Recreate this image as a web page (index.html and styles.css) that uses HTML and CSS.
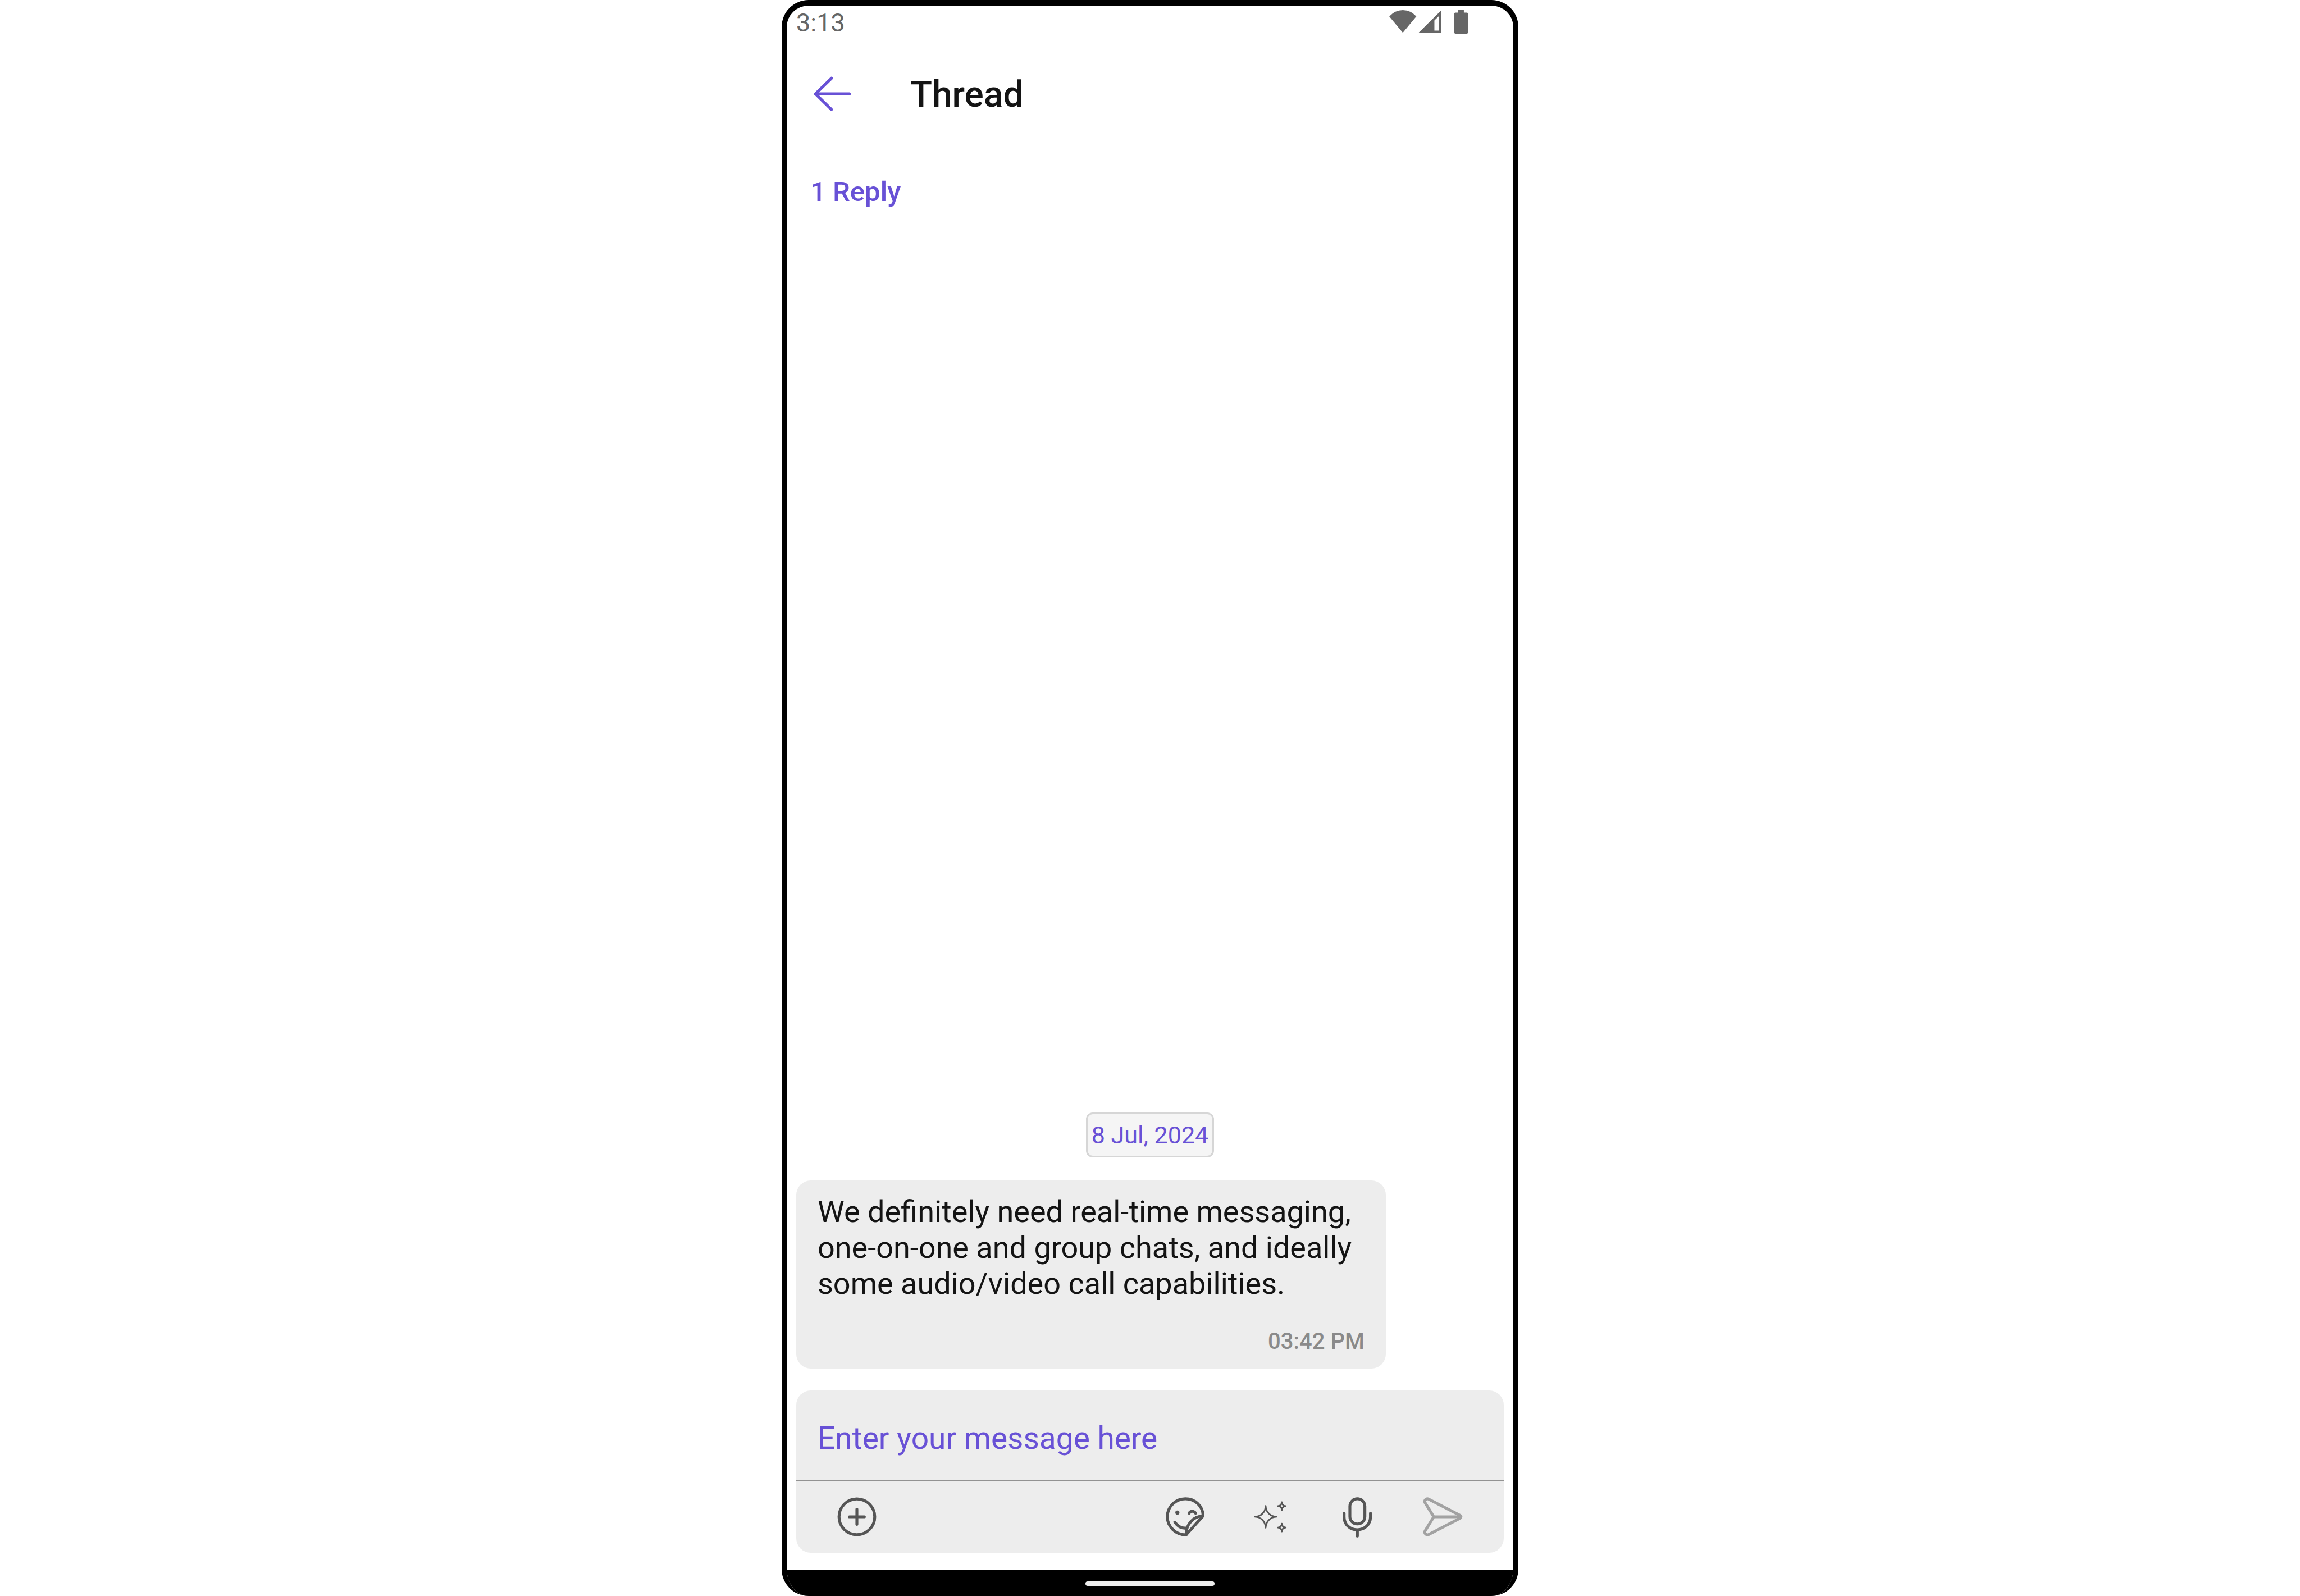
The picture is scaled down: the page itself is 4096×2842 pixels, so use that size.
FILE: index.html
```html
<!DOCTYPE html>
<html lang="en">
<head>
<meta charset="utf-8">
<meta name="viewport" content="width=device-width, initial-scale=1">
<title>Thread</title>
<link rel="stylesheet" href="styles.css">
</head>
<body>
<div class="phone">
  <div class="status-bar">
    <span class="clock">3:13</span>
    <svg class="status-icons" viewBox="291 50 461 155" aria-hidden="true">
      <path d="M291 97Q325 60 370.500 60T450 97L370.500 193Z"/>
      <path fill-rule="evenodd" d="M462 194L597 61V194ZM556 121V180H582V95Z"/>
      <path d="M696 60H729V75H745Q753 75 753 83V190Q753 198 745 198H680Q672 198 672 190V83Q672 75 680 75H696Z"/>
    </svg>
  </div>

  <header class="header">
    <button class="icon-button back" type="button" aria-label="Back">
      <svg class="icon" viewBox="191 423 264 264"><path d="M319 457L225 549L319 641M225 549H424"/></svg>
    </button>
    <h1 class="title">Thread</h1>
  </header>

  <p class="reply-count">1 Reply</p>

  <main class="messages">
    <time class="date" datetime="2024-07-08">8 Jul, 2024</time>
    <div class="message-row">
      <article class="bubble">
        <p class="bubble-text">We definitely need real-time messaging, one-on-one and group chats, and ideally some audio/video call capabilities.</p>
        <time class="bubble-time" datetime="15:42">03:42 PM</time>
      </article>
    </div>
  </main>

  <form class="composer">
    <input class="message-input" type="text" aria-label="Message" placeholder="Enter your message here">
    <div class="toolbar">
      <button class="icon-button attach" type="button" aria-label="Add attachment">
        <svg class="icon" viewBox="0 0 264 264"><circle cx="132" cy="132" r="105"/><path d="M132 88V176M88 132H176"/></svg>
      </button>
      <button class="icon-button" type="button" aria-label="Stickers">
        <svg class="icon" viewBox="103 129 264 264">
          <path d="M339 256C339 198 292 155 235 155C176 155 129 202 129 261C129 320 180 368 239 367Z"/>
          <path d="M339 256C283 256 239 304 239 367M173 292C189 317 211 330 240 327M257 240C264 226 285 224 295 240"/>
          <circle class="solid" cx="188" cy="236" r="12"/>
        </svg>
      </button>
      <button class="icon-button" type="button" aria-label="AI suggestions">
        <svg class="icon thin" viewBox="607 129 264 264">
          <path d="M706 197C708 232 730 259 770 261C730 263 708 290 706 325C704 290 682 263 643 261C682 259 704 232 706 197Z"/>
          <path d="M801 175C802 188 810 197 824 198C810 199 802 208 801 221C800 208 792 199 778 198C792 197 800 188 801 175Z"/>
          <path d="M801 301C802 314 810 323 824 324C810 325 802 334 801 347C800 334 792 325 778 324C792 323 800 314 801 301Z"/>
        </svg>
      </button>
      <button class="icon-button" type="button" aria-label="Record voice message">
        <svg class="icon" viewBox="153 129 264 264">
          <rect x="242" y="155" width="88" height="148" rx="44"/>
          <path d="M208 241V262C208 306 242 337 285 337S363 306 363 262V241M286 337V374"/>
        </svg>
      </button>
      <button class="icon-button send" type="submit" aria-label="Send">
        <svg class="icon" viewBox="656 129 264 264">
          <path d="M703 157L888 253Q898 261 888 269L703 365C689 371 676 359 682 344L733 261L682 178C676 163 689 151 703 157ZM733 261H890"/>
        </svg>
      </button>
    </div>
  </form>

  <div class="nav-bar"><span class="home-indicator"></span></div>
</div>
</body>
</html>
```
FILE: styles.css
```css
* {
  box-sizing: border-box;
}

body {
  margin: 0;
  background: #fff;
  color: #141414;
  font-family: Roboto, "Liberation Sans", sans-serif;
}

h1,
p {
  margin: 0;
}

.phone {
  display: flex;
  flex-direction: column;
  width: 100%;
  max-width: 1312px;
  min-height: 100vh;
  margin: 0 auto;
  overflow: hidden;
  background: #fff;
  border: 10px solid #000;
  border-width: 10px 9px 0;
  border-radius: 48px;
}

.status-bar {
  display: flex;
  justify-content: space-between;
  align-items: flex-start;
  padding: 5px 81px 0 17px;
  color: #666;
}

.clock {
  font-size: 45px;
  line-height: 52px;
}

.status-icons {
  width: 140px;
  height: 47px;
  fill: #666;
}

.header {
  display: flex;
  align-items: center;
  gap: 99px;
  padding: 62px 41px 0;
}

.icon-button {
  width: 80px;
  height: 80px;
  padding: 0;
  border: 0;
  background: none;
  color: #555;
  cursor: pointer;
}

.icon {
  display: block;
  width: 80px;
  height: 80px;
  fill: none;
  stroke: currentColor;
  stroke-width: 17;
  stroke-linecap: round;
  stroke-linejoin: round;
}

.icon.thin {
  stroke-width: 9;
}

.icon .solid {
  fill: currentColor;
  stroke: none;
}

.back {
  color: #6851d6;
}

.title {
  font-size: 64px;
  font-weight: 500;
  line-height: 76px;
}

.reply-count {
  padding: 105px 42px 0;
  color: #6851d6;
  font-size: 49px;
  font-weight: 500;
  line-height: 56px;
}

.messages {
  display: flex;
  flex: 1;
  flex-direction: column;
  justify-content: flex-end;
  gap: 41px;
  padding: 40px 17px 39px;
}

.date {
  align-self: center;
  padding: 12px 7px;
  border: 3px solid #d6d6d6;
  border-radius: 12px;
  background: #f5f5f5;
  color: #6851d6;
  font-size: 43px;
  line-height: 50px;
}

.message-row {
  display: grid;
  grid-template-columns: 5fr 1fr;
}

.bubble {
  display: flex;
  flex-direction: column;
  gap: 48px;
  padding: 24px 38px 25px;
  border-radius: 26px;
  background: #ededed;
}

.bubble-text {
  font-size: 54px;
  line-height: 64px;
}

.bubble-time {
  align-self: flex-end;
  color: #8a8a8a;
  font-size: 40px;
  font-weight: 500;
  line-height: 46px;
}

.composer {
  margin: 0 17px 30px;
  overflow: hidden;
  border-radius: 26px;
  background: #ededed;
}

.message-input {
  display: block;
  width: 100%;
  height: 162px;
  padding: 53px 38px 42px;
  border: 0;
  border-bottom: 3px solid #929292;
  outline: 0;
  background: none;
  color: #141414;
  font-family: inherit;
  font-size: 55px;
  line-height: 64px;
}

.message-input::placeholder {
  color: #6851d6;
  opacity: 1;
}

.toolbar {
  display: flex;
  gap: 73px;
  padding: 23px 68px 24px;
}

.attach {
  margin-right: auto;
}

.send {
  color: #a2a2a2;
}

.nav-bar {
  display: flex;
  justify-content: center;
  padding: 21px 0 18px;
  background: #000;
}

.home-indicator {
  width: 230px;
  height: 8px;
  border-radius: 4px;
  background: #ededed;
}
```
